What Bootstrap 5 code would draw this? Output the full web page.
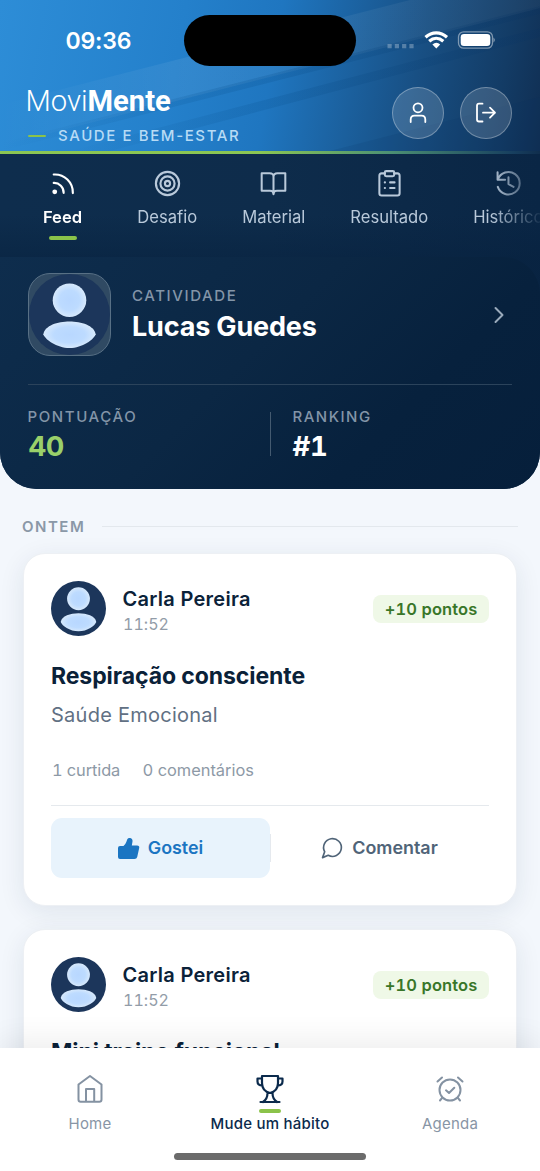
<!DOCTYPE html>
<html lang="pt-BR">
<head>
<meta charset="utf-8">
<meta name="viewport" content="width=device-width, initial-scale=1">
<title>MoviMente</title>
<link rel="stylesheet" href="https://cdn.jsdelivr.net/npm/bootstrap@5.3.0/dist/css/bootstrap.min.css">
<style>
html,body{height:1171px;overflow:hidden}
body{font-family:Inter,"Liberation Sans",sans-serif;background:#f3f7fc;color:#0b2239}
svg{display:block;flex:none}
.ico{fill:none;stroke:currentColor;stroke-width:2;stroke-linecap:round;stroke-linejoin:round}
.hero{background:linear-gradient(180deg,transparent 0,transparent 215px,rgba(7,33,62,.5) 257px),linear-gradient(90deg,#0e2d4d 0%,#0e2c4b 50%,#0a2645 100%);border-radius:0 0 37px 37px;height:489px;overflow:hidden}
.brandbar{height:154px;position:relative;background:linear-gradient(100deg,#2d8dd7 0%,#2480cb 33%,#1f76c0 50%,#184f83 76%,#133c66 91%,#102e52 100%)}
.rays{position:absolute;left:0;top:0}
.accent{position:absolute;left:0;right:0;bottom:0;height:3px;background:linear-gradient(90deg,#8bc653 0%,#8bc653 48%,#4d9174 72%,#173f5f 95%,#102e4d)}
.status{height:82px;position:relative}
.clock{font-size:23px;font-weight:600;line-height:28px;margin:27px 0 0 65.5px;letter-spacing:-.15px}
.island{position:absolute;left:184px;top:15px;width:172px;height:51px;border-radius:26px;background:#000}
.status-icons{margin:31px 45px 0 0;height:18px}
.logo{font-family:Roboto,sans-serif;font-size:29.2px;font-weight:300;line-height:34px;margin-top:2px}
.logo b{font-weight:700}
.tagline{font-size:15px;line-height:18px;font-weight:500;letter-spacing:1.6px;color:#b7dbf5;margin-top:9px;margin-left:2px;white-space:nowrap}
.tagline i{width:18.5px;height:2.5px;border-radius:1px;background:#8bc34a;margin-right:12px}
.round{width:52px;height:52px;border-radius:50%;border:1px solid rgba(255,255,255,.3);background:rgba(255,255,255,.15);color:#fff}
.tabs{height:103px;gap:45px;padding:16px 0 0 34px;font-size:16.6px;line-height:20px;color:#b9c9da;-webkit-mask-image:linear-gradient(90deg,#000 490px,rgba(0,0,0,.08) 540px);mask-image:linear-gradient(90deg,#000 490px,rgba(0,0,0,.08) 540px)}
.tabs .tab svg{margin-bottom:10px}
.tab{white-space:nowrap}
.tab.on{color:#fff;font-weight:600;min-width:57px}
.tab.on::after{content:"";width:28px;height:4px;border-radius:2px;background:#8bc34a;margin-top:9px}
.profile{height:232px;padding:16px 28px 0;border-radius:0 37px 0 0;background:linear-gradient(135deg,#0e2d4d 0%,#0b2744 45%,#07213d 72%,#061f3b 100%)}
.photo{width:83px;height:83px;border-radius:22px;border:1.5px solid #587085;background:#304a63;overflow:hidden;margin-left:-.5px}
.cap{font-size:15px;line-height:18px;font-weight:500;letter-spacing:1.6px;color:#8395a8}
.who{font-size:27px;font-weight:700;line-height:34px;color:#fff;letter-spacing:-.18px}
.rule{height:1px;background:#2b435b}
.num{font-size:27.5px;font-weight:700;line-height:34px;letter-spacing:-.4px}
.feed{padding:0 23px;height:559px}
.day{font-size:15px;font-weight:600;letter-spacing:1.5px;line-height:18px;color:#8a98a7;margin-left:-1px}
.post{height:353px;background:#fff;border:1px solid #edf0f4;border-radius:22px;padding:27px 27px 0;box-shadow:0 6px 26px rgba(20,45,75,.09);margin-bottom:23px}
.name{font-size:20px;font-weight:600;line-height:24px;letter-spacing:.28px;margin-left:-.5px}
.time{font-size:16px;line-height:20px;color:#929ca8;margin-top:3px;font-variant-numeric:tabular-nums;letter-spacing:.05px}
.pts{font-size:16.5px;font-weight:600;line-height:28px;height:28px;width:116px;border-radius:8px;background:#eff8e7;color:#397629;text-align:center;white-space:nowrap;font-variant-numeric:tabular-nums;letter-spacing:.1px}
.post h2{font-size:23px;font-weight:700;line-height:30px;margin:25px 0 0;letter-spacing:-.08px;color:#0a2138}
.topic{font-size:20px;line-height:26px;color:#617083;margin-top:11px;letter-spacing:.25px}
.meta{font-size:16.4px;line-height:22px;color:#8d99a6;margin:31px 0 0 1px;gap:22.5px}
.act{font-size:17.9px;font-weight:600;height:60px;border-radius:11px}
.like{background:#e8f3fc;color:#1b75c2}
.say{color:#506478}
.say::before{content:"";position:absolute;left:0;top:16px;width:1px;height:28px;background:#e5e9ee}
.dock{position:absolute;left:0;right:0;top:1048px;height:123px;background:#fff;box-shadow:0 -8px 28px rgba(0,0,0,.07);font-size:15px;line-height:18px;letter-spacing:.22px;color:#8895a5}
.dock .item{width:180px;padding-top:25px}
.dock .item span{margin-top:10px}
.dock .on{color:#0b2a4c;font-weight:500;position:relative}
.dock .on::before{content:"";position:absolute;left:79px;top:61px;width:22px;height:4px;border-radius:2px;background:#8bc34a}
.grip{position:absolute;left:174px;top:105px;width:192px;height:7px;border-radius:4px;background:#6b6b6b}
</style>
</head>
<body class="position-relative">
<svg width="0" height="0" class="position-absolute" aria-hidden="true">
<defs>
<radialGradient id="skin"><stop offset="0" stop-color="#b8d7ff"/><stop offset=".6" stop-color="#bddbff"/><stop offset="1" stop-color="#d7e9fc"/></radialGradient>
<symbol id="person" viewBox="0 0 82 82"><circle cx="41" cy="41" r="41" fill="#1c365b"/><circle cx="41" cy="26.500" r="17" fill="url(#skin)"/><path d="M14.500 61C16 52 29 48 41 48S66 52 67.500 61C66 66 54 75 41 75S16 66 14.500 61Z" fill="url(#skin)"/></symbol>
</defs>
</svg>

<header class="hero">
  <div class="brandbar">
    <svg class="rays" width="540" height="151" viewBox="0 0 540 151">
      <defs><linearGradient id="fade"><stop offset="0" stop-color="#fff" stop-opacity="0"/><stop offset=".35" stop-color="#fff" stop-opacity=".07"/><stop offset="1" stop-color="#fff" stop-opacity=".04"/></linearGradient>
      <linearGradient id="shade"><stop offset="0" stop-color="#07508f" stop-opacity="0"/><stop offset=".4" stop-color="#07508f" stop-opacity=".2"/><stop offset="1" stop-color="#07305f" stop-opacity=".2"/></linearGradient></defs>
      <path d="M0 105L410 0H540V8L0 146Z" fill="url(#fade)"/>
      <path d="M0 143L540 6V14L0 151Z" fill="url(#shade)"/>
      <path d="M70 151L540 28V37L110 151Z" fill="url(#shade)"/>
      <path d="M330 151L540 97V151Z" fill="#07305f" opacity=".12"/>
    </svg>
    <div class="position-relative text-white">
      <div class="status d-flex justify-content-between align-items-start">
        <div class="clock">09:36</div>
        <div class="island"></div>
        <svg class="status-icons" width="109" height="18" viewBox="0 0 109 18">
          <g fill="#fff" opacity=".28"><path d="M1.500 13H5.700v4.200H1.500zM8.800 13H13v4.200H8.800zM16.100 13h4.200v4.200h-4.200zM23.400 13h4.200v4.200h-4.200z"/></g>
          <g fill="none" stroke="#fff" stroke-width="3.200"><path d="M39.500 6.200C46 .5 54.500 .5 61 6.200"/><path d="M43.200 10.300C47.500 6.500 53 6.500 57.300 10.300"/></g><path d="M46.400 13.400C49 11.300 51.700 11.300 54.200 13.400L50.300 17.500Z" fill="#fff"/>
          <rect x="72.500" y=".8" width="34" height="16.400" rx="5.200" fill="none" stroke="#fff" stroke-opacity=".45" stroke-width="1.300"/><rect x="74.700" y="3" width="29.600" height="12" rx="3.300" fill="#fff"/><path d="M107.500 6.500q2.600 2.500 0 5z" fill="#fff" opacity=".5"/>
        </svg>
      </div>
      <div class="d-flex justify-content-between ps-4 pe-4">
        <div class="ps-1" style="margin-left:-2.500px">
          <div class="logo">Movi<b>Mente</b></div>
          <div class="tagline d-flex align-items-center"><i></i>SAÚDE E BEM-ESTAR</div>
        </div>
        <div class="d-flex gap-3 pt-1" style="margin-right:4px;margin-top:1.400px">
          <div class="round d-flex align-items-center justify-content-center" style="margin-right:.5px"><svg class="ico" width="22" height="22" viewBox="0 0 22 22" style="stroke-width:1.800"><circle cx="11" cy="5.800" r="4.500"/><path d="M3.700 20V17.500Q3.700 13.700 7.500 13.700H14.500Q18.300 13.700 18.300 17.500V20"/></svg></div>
          <div class="round d-flex align-items-center justify-content-center"><svg class="ico" width="22" height="22" viewBox="0 0 22 22" style="stroke-width:1.800"><path d="M7.500 1.700H4Q2 1.700 2 3.700V17.500Q2 19.500 4 19.500H7.500M8 10.700H20M15 5.700L20 10.700L15 15.700"/></svg></div>
        </div>
      </div>
    </div>
    <div class="accent"></div>
  </div>

  <nav class="tabs d-flex">
    <div class="tab on d-flex flex-column align-items-center"><svg class="ico" width="27" height="27" viewBox="0 0 24 24" style="stroke-width:1.900"><path d="M4.200 11.500a8.500 8.500 0 0 1 8.800 8.800M4.200 4a16 16 0 0 1 17 16.500"/><circle cx="5.100" cy="19.400" r="1.200" fill="currentColor"/></svg>Feed</div>
    <div class="tab d-flex flex-column align-items-center" style="margin-left:1.300px"><svg class="ico" width="27" height="27" viewBox="0 0 24 24" style="stroke-width:1.900"><circle cx="12" cy="12" r="10.300"/><circle cx="12" cy="12" r="6.300"/><circle cx="12" cy="12" r="2.300"/></svg>Desafio</div>
    <div class="tab d-flex flex-column align-items-center"><svg class="ico" width="27" height="27" viewBox="0 0 24 24" style="stroke-width:1.800"><path d="M12 6Q12 2.800 8.500 2.800H1.500V18.500H9Q12 18.500 12 21.500Q12 18.500 15 18.500H22.500V2.800H15.500Q12 2.800 12 6V21.500"/></svg>Material</div>
    <div class="tab d-flex flex-column align-items-center"><svg class="ico" width="27" height="27" viewBox="0 0 24 24" style="stroke-width:1.800"><path d="M8 3H5Q3 3 3 5V20.700Q3 22.700 5 22.700H19Q21 22.700 21 20.700V5Q21 3 19 3H16M12.500 11H16.500M12.500 16H16.500M7.800 11H8M7.800 16H8"/><rect x="7.800" y="1" width="8.400" height="4.500" rx="1.300"/></svg>Resultado</div>
    <div class="tab d-flex flex-column align-items-center"><svg class="ico" width="27" height="27" viewBox="0 0 24 24" style="stroke-width:1.800"><path d="M2.500 8.500A10 10 0 1 1 2.500 15M2.300 2V8.700H9M12 6.500V12.500L16.500 15"/></svg>Histórico</div>
  </nav>

  <section class="profile">
    <div class="d-flex">
      <div class="photo"><svg width="81" height="81"><use href="#person"/></svg></div>
      <div class="flex-grow-1" style="margin:14px 0 0 21.500px"><div class="cap">CATIVIDADE</div><div class="who" style="margin-top:5px">Lucas Guedes</div></div>
      <svg class="ico" width="12" height="18" viewBox="0 0 12 18" style="margin:33px 7px 0 0;color:#9aaabb"><path d="M2.500 2L9.500 9L2.500 16"/></svg>
    </div>
    <div class="rule" style="margin-top:27.500px"></div>
    <div class="d-flex" style="padding-top:23px">
      <div style="width:242px"><div class="cap" style="margin-left:-.5px">PONTUAÇÃO</div><div class="num" style="color:#9ad06a;margin-top:3px;letter-spacing:-.9px">40</div></div>
      <div style="width:1px;height:44px;margin-top:4px;margin-left:-.5px;background:#445a70"></div>
      <div style="padding-left:22px"><div class="cap" style="letter-spacing:1.500px">RANKING</div><div class="num text-white" style="margin-top:3px;font-variant-numeric:tabular-nums">#1</div></div>
    </div>
  </section>
</header>

<main class="feed overflow-hidden">
  <div class="d-flex align-items-center" style="padding-top:29px;height:64px;padding-bottom:17px">
    <div class="day">ONTEM</div><div class="flex-grow-1" style="height:1px;background:#e3e8ed;margin-left:17px;margin-right:-1px;margin-top:-1px"></div>
  </div>
  <article class="post">
    <div class="d-flex">
      <svg width="55" height="55"><use href="#person"/></svg>
      <div class="flex-grow-1" style="margin:6px 0 0 17px"><div class="name">Carla Pereira</div><div class="time">11:52</div></div>
      <div class="pts" style="margin-top:14px">+10 pontos</div>
    </div>
    <h2>Respiração consciente</h2>
    <div class="topic">Saúde Emocional</div>
    <div class="meta d-flex"><span style="font-variant-numeric:tabular-nums;letter-spacing:-.1px">1 curtida</span><span>0 comentários</span></div>
    <div style="height:1px;background:#e5e9ed;margin:24px 0 12px"></div>
    <div class="d-flex">
      <div class="act like w-50 d-flex align-items-center justify-content-center"><svg width="23" height="23" viewBox="0 0 23 23" fill="currentColor" style="margin-right:8px;margin-left:-1px"><path d="M1 11Q1 9 3 9H6.500Q8.300 7.800 9.300 5L10.300 2.200Q11.200 .5 13.300 1Q15.800 1.700 15.500 4.500L14.800 8.500H20Q22.800 8.500 22.200 11L20.200 20Q19.700 22 17.500 22H3Q1 22 1 20Z"/></svg>Gostei</div>
      <div class="act say w-50 position-relative d-flex align-items-center justify-content-center"><svg class="ico" width="22" height="22" viewBox="0 0 24 24" style="margin-right:9px;stroke-width:1.800"><path d="M7.900 20A9.700 9.700 0 1 0 4 16.100L1.700 22.500Z"/></svg>Comentar</div>
    </div>
  </article>
  <article class="post">
    <div class="d-flex">
      <svg width="55" height="55"><use href="#person"/></svg>
      <div class="flex-grow-1" style="margin:6px 0 0 17px"><div class="name">Carla Pereira</div><div class="time">11:52</div></div>
      <div class="pts" style="margin-top:14px">+10 pontos</div>
    </div>
    <h2>Mini treino funcional</h2>
  </article>
</main>

<nav class="dock d-flex">
  <div class="item d-flex flex-column align-items-center"><svg class="ico" width="32" height="32" viewBox="0 0 32 32" style="color:#8492a2"><path d="M4.500 11.500L16 3L27.500 11.500V26.500Q27.500 28.700 25.300 28.700H6.700Q4.500 28.700 4.500 26.500ZM12 28.700V16H20.200V28.700"/></svg><span>Home</span></div>
  <div class="item on d-flex flex-column align-items-center"><svg class="ico" width="32" height="32" viewBox="0 0 32 32" style="stroke-width:2.200"><path d="M8 3H24V10Q24 18 16 20Q8 18 8 10ZM8 5.500H3.500V8.500Q3.500 12.500 8.500 12.500M24 5.500H28.500V8.500Q28.500 12.500 23.500 12.500M13.500 20Q13.500 26 9 29M18.500 20Q18.500 26 23 29M6.500 29H25.500"/></svg><span>Mude um hábito</span></div>
  <div class="item d-flex flex-column align-items-center"><svg class="ico" width="32" height="32" viewBox="0 0 32 32" style="color:#8492a2"><circle cx="16" cy="17" r="10.500"/><path d="M12 17.300L15 20L20.300 14.700M3.500 8.500L8 4.500M24 4.500L28.500 8.500M8.300 24.700L6 27.500M23.700 24.700L26 27.500"/></svg><span>Agenda</span></div>
  <div class="grip"></div>
</nav>
<script src="https://cdn.jsdelivr.net/npm/bootstrap@5.3.0/dist/js/bootstrap.bundle.min.js"></script>
</body>
</html>
